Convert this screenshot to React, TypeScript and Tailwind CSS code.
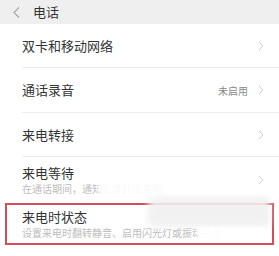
import React from 'react';

const font = { fontFamily: '"Noto Sans CJK SC", "Noto Sans", sans-serif' };

function Chevron({ className = '' }: { className?: string }) {
  return (
    <svg width="6" height="10" viewBox="0 0 6 10" className={className}>
      <path d="M1 1l4 4-4 4" fill="none" stroke="#cfcfcf" strokeWidth="1" />
    </svg>
  );
}

function Row({
  title,
  sub,
  value,
  height,
  divider = true,
}: {
  title: string;
  sub?: string;
  value?: string;
  height: string;
  divider?: boolean;
}) {
  return (
    <div className="pl-[22px]">
      <div
        className={`flex items-center pr-[15px] ${height} ${divider ? 'border-b border-[#ececec]' : ''}`}
      >
        <div className="flex-1 min-w-0">
          <p className="text-[13px] leading-[18px] text-[#333]">{title}</p>
          {sub && (
            <p className="text-[10px] leading-[14px] text-[#bdbdbd] whitespace-nowrap overflow-hidden">
              {sub}
            </p>
          )}
        </div>
        {value && (
          <span className="text-[10px] text-[#8a8a8a] mr-[10px]">{value}</span>
        )}
        <Chevron />
      </div>
    </div>
  );
}

export default function App() {
  return (
    <div className="w-[279px] h-[256px] bg-white relative overflow-hidden" style={font}>
      {/* header */}
      <div className="h-[24px] bg-[#efefef] flex items-center pl-[13px]">
        <svg width="7" height="11" viewBox="0 0 7 11">
          <path d="M6 0.5L1 5.5l5 5" fill="none" stroke="#a5a5a5" strokeWidth="1.1" />
        </svg>
        <span className="ml-[13px] text-[13px] text-[#333]">电话</span>
      </div>

      <Row title="双卡和移动网络" height="h-[44px]" />
      <Row title="通话录音" value="未启用" height="h-[45px]" />
      <Row title="来电转接" height="h-[44px]" />
      <Row
        title="来电等待"
        sub="在通话期间，通知您有其他来电"
        height="h-[45px]"
        divider={false}
      />

      <div className="mx-[5px] mt-[1px] border-2 border-[#d24c5a] h-[42px] flex items-center pl-[15px] pr-[10px]">
        <div className="flex-1 min-w-0">
          <p className="text-[13px] leading-[18px] text-[#333]">来电时状态</p>
          <p className="text-[10px] leading-[14px] text-[#bdbdbd] whitespace-nowrap overflow-hidden">
            设置来电时翻转静音、启用闪光灯或振动提醒
          </p>
        </div>
      </div>

      {/* smudge overlays */}
      <div className="absolute left-[98px] top-[181px] w-[160px] h-[17px] bg-white/90 blur-[2px]" />
      <div className="absolute left-[148px] top-[197px] w-[122px] h-[30px] rounded-[6px] bg-[#efefef]/90 blur-[3px]" />
      <div className="absolute left-[197px] top-[227px] w-[66px] h-[13px] bg-white/95 blur-[1px]" />
    </div>
  );
}
